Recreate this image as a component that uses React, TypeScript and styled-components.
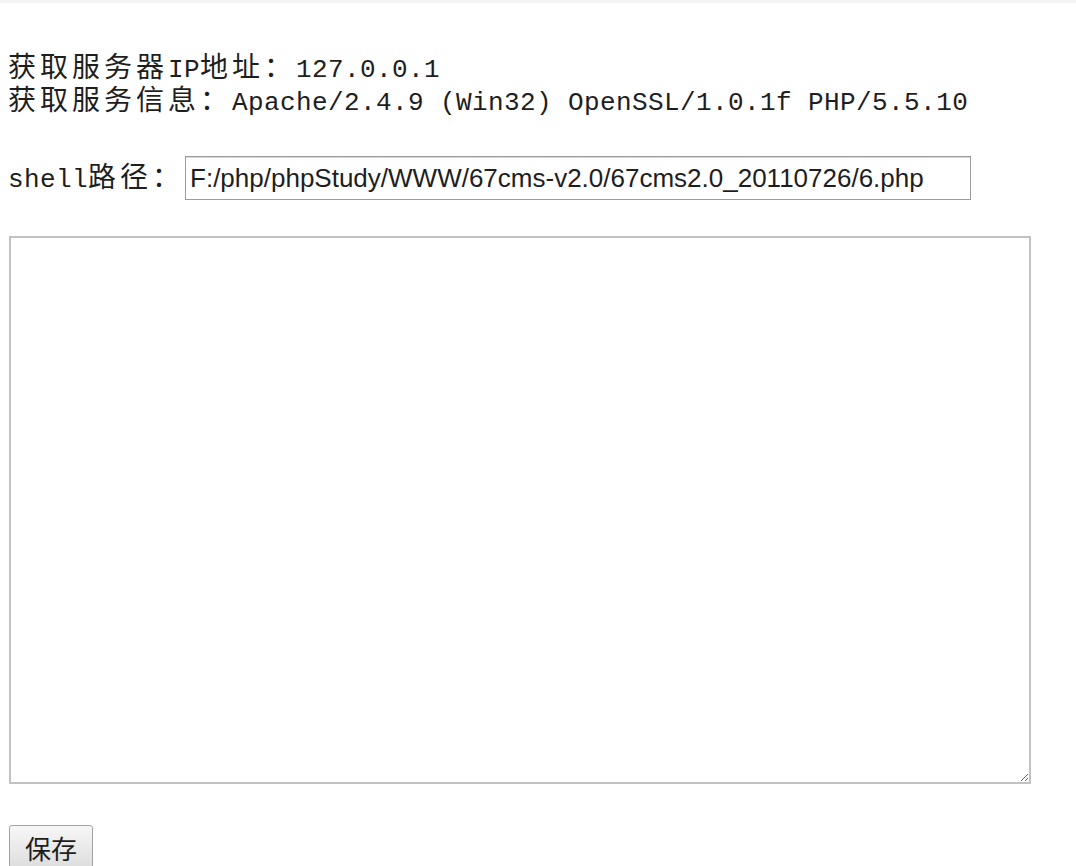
import React from 'react';
import styled, { createGlobalStyle } from "styled-components";

const GlobalStyle = createGlobalStyle`
  html, body {
    margin: 0;
    padding: 0;
    background: #ffffff;
  }
  body {
    font-family: "Liberation Mono", "Noto Sans CJK SC", monospace;
    color: #1e1e1e;
  }
`;

const Page = styled.div`
  display: flex;
  flex-direction: column;
  align-items: flex-start;
  padding: 0 0 0 8px;
  border-top: 3px solid #f4f4f4;
  box-sizing: border-box;
  width: 1076px;
  height: 866px;
  overflow: hidden;

  & > * {
    flex-shrink: 0;
  }
`;

const Info = styled.div`
  display: flex;
  flex-direction: column;
  margin-top: 51px;
`;

// ascii cells are 16px, CJK cells 32px, like the old SimSun look
const Line = styled.div`
  font-family: "Liberation Mono", "Noto Sans CJK SC", monospace;
  font-size: 26px;
  letter-spacing: 0.4px;
  line-height: 33px;
  height: 33px;
  white-space: pre;
  color: #1e1e1e;
`;

const Label = styled(Line)`
  margin-top: 5px;
`;

const Han = styled.span`
  font-family: "Noto Sans CJK SC", sans-serif;
  font-size: 28px;
  letter-spacing: 4px;
  line-height: 20px;
`;

const ShellRow = styled.div`
  display: flex;
  flex-direction: row;
  align-items: center;
  margin-top: 36px;
`;

const PathInput = styled.input`
  width: 786px;
  height: 44px;
  margin-left: 1px;
  box-sizing: border-box;
  padding: 0 4px;
  border: 1px solid #9c9c9c;
  box-shadow: inset 0 1px 0 #d6d6d6;
  font-family: "Liberation Sans", Arial, sans-serif;
  font-size: 26px;
  color: #1e1e1e;
  outline: none;
`;

const Editor = styled.textarea`
  width: 1022px;
  height: 548px;
  box-sizing: border-box;
  margin-top: 36px;
  margin-left: 1px;
  border: 2px solid #c2c2c2;
  font-family: "Liberation Mono", monospace;
  font-size: 20px;
  resize: both;
  outline: none;
`;

const SaveButton = styled.button`
  margin-top: 41px;
  margin-left: 1px;
  width: 84px;
  height: 46px;
  padding: 0 0 2px;
  border: 1px solid #a3a3a3;
  border-radius: 3px;
  background: linear-gradient(#f7f7f7, #dcdcdc);
  font-family: "Noto Sans CJK SC", sans-serif;
  font-size: 26px;
  color: #1e1e1e;
  cursor: pointer;
`;

export default function App() {
    return (
        <>
            <GlobalStyle />
            <Page>
                <Info>
                    <Line><Han>获取服务器</Han>IP<Han>地址：</Han>127.0.0.1</Line>
                    <Line><Han>获取服务信息：</Han>Apache/2.4.9 (Win32) OpenSSL/1.0.1f PHP/5.5.10</Line>
                </Info>
                <ShellRow>
                    <Label>shell<Han>路径：</Han></Label>
                    <PathInput defaultValue="F:/php/phpStudy/WWW/67cms-v2.0/67cms2.0_20110726/6.php" />
                </ShellRow>
                <Editor />
                <SaveButton>保存</SaveButton>
            </Page>
        </>
    );
}
